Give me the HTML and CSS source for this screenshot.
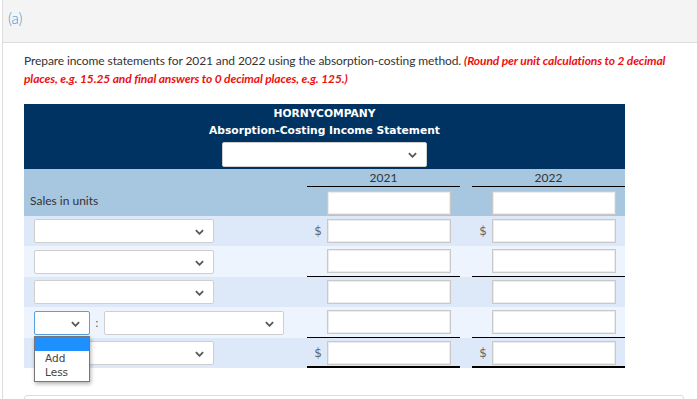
FILE: index.html
```html
<!DOCTYPE html>
<html lang="en">

<head>
    <meta charset="UTF-8">
    <meta name="viewport" content="width=device-width, initial-scale=1.0">
    <title>Absorption-Costing Income Statement</title>

    <link rel="stylesheet" href="styles.css">
</head>

<body>
    <div class="card">
        <div class="card-head">(a)</div>

        <div class="card-body">
            <p class="prompt">
                Prepare income statements for 2021 and 2022 using the absorption-costing method.
                <em class="hint">(Round per unit calculations to 2 decimal places, e.g. 15.25 and final answers to 0 decimal places, e.g. 125.)</em>
            </p>

            <div class="sheet">
                <div class="sheet-title">
                    <div>HORNYCOMPANY</div>
                    <div>Absorption-Costing Income Statement</div>
                    <div class="select select-title"><svg class="chev" viewBox="0 0 10 6"><polyline points="1,1 5,5 9,1" /></svg></div>
                </div>

                <div class="row row-years">
                    <div class="label"></div>
                    <div class="col line">2021</div>
                    <div class="gap"></div>
                    <div class="col line">2022</div>
                </div>

                <div class="row row-sales">
                    <div class="label">Sales in units</div>
                    <div class="col"><span class="field"></span></div>
                    <div class="gap"></div>
                    <div class="col"><span class="field"></span></div>
                </div>

                <div class="row dark">
                    <div class="label"><div class="select"><svg class="chev" viewBox="0 0 10 6"><polyline points="1,1 5,5 9,1" /></svg></div></div>
                    <div class="col"><span class="cur">$</span><span class="field"></span></div>
                    <div class="gap"></div>
                    <div class="col"><span class="cur">$</span><span class="field"></span></div>
                </div>

                <div class="row light">
                    <div class="label"><div class="select"><svg class="chev" viewBox="0 0 10 6"><polyline points="1,1 5,5 9,1" /></svg></div></div>
                    <div class="col line"><span class="field"></span></div>
                    <div class="gap"></div>
                    <div class="col line"><span class="field"></span></div>
                </div>

                <div class="row dark">
                    <div class="label"><div class="select"><svg class="chev" viewBox="0 0 10 6"><polyline points="1,1 5,5 9,1" /></svg></div></div>
                    <div class="col"><span class="field"></span></div>
                    <div class="gap"></div>
                    <div class="col"><span class="field"></span></div>
                </div>

                <div class="row light">
                    <div class="label">
                        <div class="pick">
                            <div class="select select-small focused"><svg class="chev" viewBox="0 0 10 6"><polyline points="1,1 5,5 9,1" /></svg></div>
                            <ul class="dropdown">
                                <li class="picked">&nbsp;</li>
                                <li>Add</li>
                                <li>Less</li>
                            </ul>
                        </div>
                        <span class="colon">:</span>
                        <div class="select"><svg class="chev" viewBox="0 0 10 6"><polyline points="1,1 5,5 9,1" /></svg></div>
                    </div>
                    <div class="col line"><span class="field"></span></div>
                    <div class="gap"></div>
                    <div class="col line"><span class="field"></span></div>
                </div>

                <div class="row dark">
                    <div class="label"><div class="select"><svg class="chev" viewBox="0 0 10 6"><polyline points="1,1 5,5 9,1" /></svg></div></div>
                    <div class="col total"><span class="cur">$</span><span class="field"></span></div>
                    <div class="gap"></div>
                    <div class="col total"><span class="cur">$</span><span class="field"></span></div>
                </div>
            </div>

            <div class="next-card"></div>
        </div>
    </div>
</body>

</html>
```

FILE: styles.css
```css
body {
    margin: 0;
    font-family: "Lato", "Open Sans", sans-serif;
    color: #333;
    background-color: #fff;
    overflow: hidden;
}

.card {
    margin-left: 2px;
    border-left: 1px solid #ddd;
    height: 399px;
}

.card-head {
    height: 43px;
    box-sizing: border-box;
    padding: 9px 0 0 5px;
    background-color: #f4f4f4;
    border-bottom: 1px solid #dcdcdc;
    color: #3a98dc;
    font-size: 15px;
    font-weight: 300;
}

.card-body {
    padding: 0 0 0 21px;
    width: 660px;
}

.prompt {
    margin: 9px 0 16px 0;
    font-size: 12px;
    line-height: 18px;
    letter-spacing: -0.1px;
}

.hint {
    color: #ec1010;
    font-weight: bold;
}

/* statement table */

.sheet {
    width: 601px;
}

.sheet-title {
    background-color: #003362;
    color: #fff;
    text-align: center;
    font-family: "DejaVu Sans", Verdana, sans-serif;
    font-weight: bold;
    font-size: 10.7px;
    line-height: 17px;
    padding: 0 0 2px 0;
    display: flex;
    flex-direction: column;
    align-items: center;
}

.sheet-title div:first-child {
    margin-top: 1px;
}

.row {
    display: grid;
    grid-template-columns: 283px 153px 12px 153px;
}

.row-years,
.row-sales {
    background-color: #a7c6df;
}

.row-years .col {
    justify-content: center;
    height: 18px;
    font-size: 12px;
    padding: 0;
}

.row-sales {
    height: 29px;
}

.row-sales .col {
    padding-top: 3px;
}

.dark {
    background-color: #dde9f8;
    height: 30px;
}

.light {
    background-color: #edf4fd;
    height: 31px;
}

.label {
    display: flex;
    align-items: center;
    padding-left: 10px;
    font-size: 12px;
}

.row-sales .label {
    padding-left: 6px;
    padding-bottom: 2px;
}

.col {
    display: flex;
    align-items: center;
    justify-content: flex-end;
    padding-right: 9px;
    box-sizing: border-box;
}

.line {
    border-bottom: 1px solid #000;
}

.total {
    border-bottom: 2px solid #000;
    padding-top: 2px;
}

.cur {
    font-family: "DejaVu Sans", Verdana, sans-serif;
    font-size: 12px;
    color: #666;
    margin-right: 5px;
}

.field {
    display: block;
    width: 124px;
    height: 24px;
    box-sizing: border-box;
    background-color: #fff;
    border: 1px solid #c9c9c9;
    box-shadow: inset 0 0 0 1px #ececec;
}

.select {
    position: relative;
    width: 180px;
    height: 24px;
    box-sizing: border-box;
    background-color: #fff;
    border: 1px solid #cfcfcf;
    border-radius: 2px;
}

.select-title {
    width: 205px;
    height: 25px;
    margin-top: 3px;
}

.select-small {
    width: 56px;
}

.focused {
    border-color: #5aa0e0;
}

.chev {
    position: absolute;
    right: 9px;
    top: 9px;
    width: 9px;
    height: 6px;
}

.chev polyline {
    fill: none;
    stroke: #555;
    stroke-width: 2;
}

.pick {
    position: relative;
}

.colon {
    font-size: 11px;
    width: 14px;
    text-align: center;
    color: #555;
}

.dropdown {
    position: absolute;
    left: 0;
    top: 25px;
    width: 56px;
    margin: 0;
    padding: 0 0 2px 0;
    list-style: none;
    box-sizing: border-box;
    background-color: #fff;
    border: 1px solid #767676;
    box-shadow: 1px 2px 4px rgba(0, 0, 0, 0.3);
    font-family: "DejaVu Sans", Verdana, sans-serif;
    font-size: 10.5px;
    color: #444;
    z-index: 2;
}

.dropdown li {
    height: 14px;
    line-height: 15px;
    padding-left: 10px;
}

.dropdown .picked {
    background-color: #1e90ff;
}

.next-card {
    margin-top: 27px;
    height: 20px;
    border: 1px solid #ddd;
    border-radius: 3px;
}
```
